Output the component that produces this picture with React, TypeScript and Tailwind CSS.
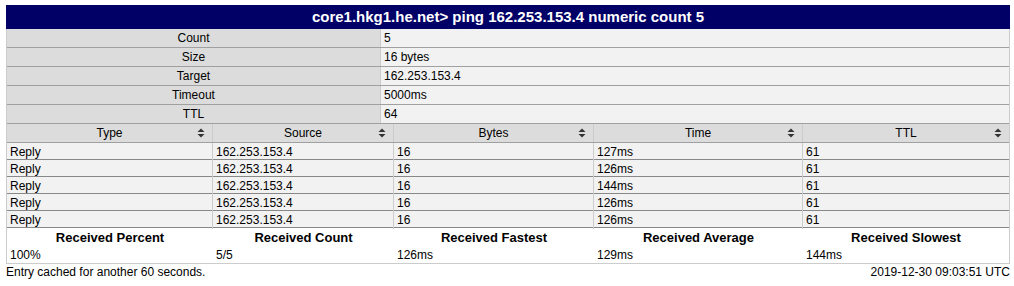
const params = [
  ["Count", "5"],
  ["Size", "16 bytes"],
  ["Target", "162.253.153.4"],
  ["Timeout", "5000ms"],
  ["TTL", "64"],
];

const replies = [
  ["Reply", "162.253.153.4", "16", "127ms", "61"],
  ["Reply", "162.253.153.4", "16", "126ms", "61"],
  ["Reply", "162.253.153.4", "16", "144ms", "61"],
  ["Reply", "162.253.153.4", "16", "126ms", "61"],
  ["Reply", "162.253.153.4", "16", "126ms", "61"],
];

const summary = [
  ["Received Percent", "100%"],
  ["Received Count", "5/5"],
  ["Received Fastest", "126ms"],
  ["Received Average", "129ms"],
  ["Received Slowest", "144ms"],
];

const cols = "grid grid-cols-[206px_181px_200px_209px_1fr]";

function SortArrows() {
  return (
    <svg width="8" height="10" viewBox="0 0 8 10" className="shrink-0">
      <path d="M4 0.5 L7.5 4 L0.5 4 Z" fill="#333" />
      <path d="M4 9.5 L7.5 6 L0.5 6 Z" fill="#333" />
    </svg>
  );
}

export default function App() {
  return (
    <div className="bg-white pl-[6px] pt-[5px] text-[12px] text-black" style={{ fontFamily: '"Liberation Sans", Arial, sans-serif' }}>
      <div className="w-[1004px]">
        {/* Title bar */}
        <div className="h-[24px] bg-[#000066] text-white font-bold text-[15px] flex items-center justify-center">
          core1.hkg1.he.net&gt; ping 162.253.153.4 numeric count 5
        </div>

        {/* Parameters */}
        <div className="border-l border-r border-[#cccccc]">
          {params.map(([k, v]) => (
            <div key={k} className="grid grid-cols-[374px_1fr] h-[19px] border-b border-[#a0a0a0]">
              <div className="bg-[#dcdcdc] flex items-center justify-center border-r border-[#cccccc]">{k}</div>
              <div className="bg-[#f2f2f2] flex items-center px-[3px]">{v}</div>
            </div>
          ))}
        </div>

        {/* Replies */}
        <div className="border-l border-r border-[#cccccc]">
          <div className={`${cols} h-[19px] border-b border-[#a0a0a0] bg-[#dcdcdc]`}>
            {["Type", "Source", "Bytes", "Time", "TTL"].map((h, i) => (
              <div key={h} className={`relative flex items-center justify-center ${i < 4 ? "border-r border-[#cccccc]" : ""}`}>
                {h}
                <span className="absolute right-[7px] top-[4px]">
                  <SortArrows />
                </span>
              </div>
            ))}
          </div>
          {replies.map((r, ri) => (
            <div key={ri} className={`${cols} h-[17px] border-b border-[#888888] bg-[#f2f2f2]`}>
              {r.map((c, i) => (
                <div key={i} className={`flex items-center px-[3px] ${i < 4 ? "border-r border-[#cccccc]" : ""}`}>
                  {c}
                </div>
              ))}
            </div>
          ))}
        </div>

        {/* Summary */}
        <div className={`${cols} border-l border-r border-b border-[#cccccc]`}>
          {summary.map(([k]) => (
            <div key={k} className="h-[19px] flex items-center justify-center font-bold text-[13px]">
              {k}
            </div>
          ))}
          {summary.map(([k, v]) => (
            <div key={k + "v"} className="h-[16px] flex items-center px-[3px]">
              {v}
            </div>
          ))}
        </div>

        <div className="flex justify-between h-[15px] items-center">
          <span>Entry cached for another 60 seconds.</span>
          <span>2019-12-30 09:03:51 UTC</span>
        </div>
      </div>
    </div>
  );
}
